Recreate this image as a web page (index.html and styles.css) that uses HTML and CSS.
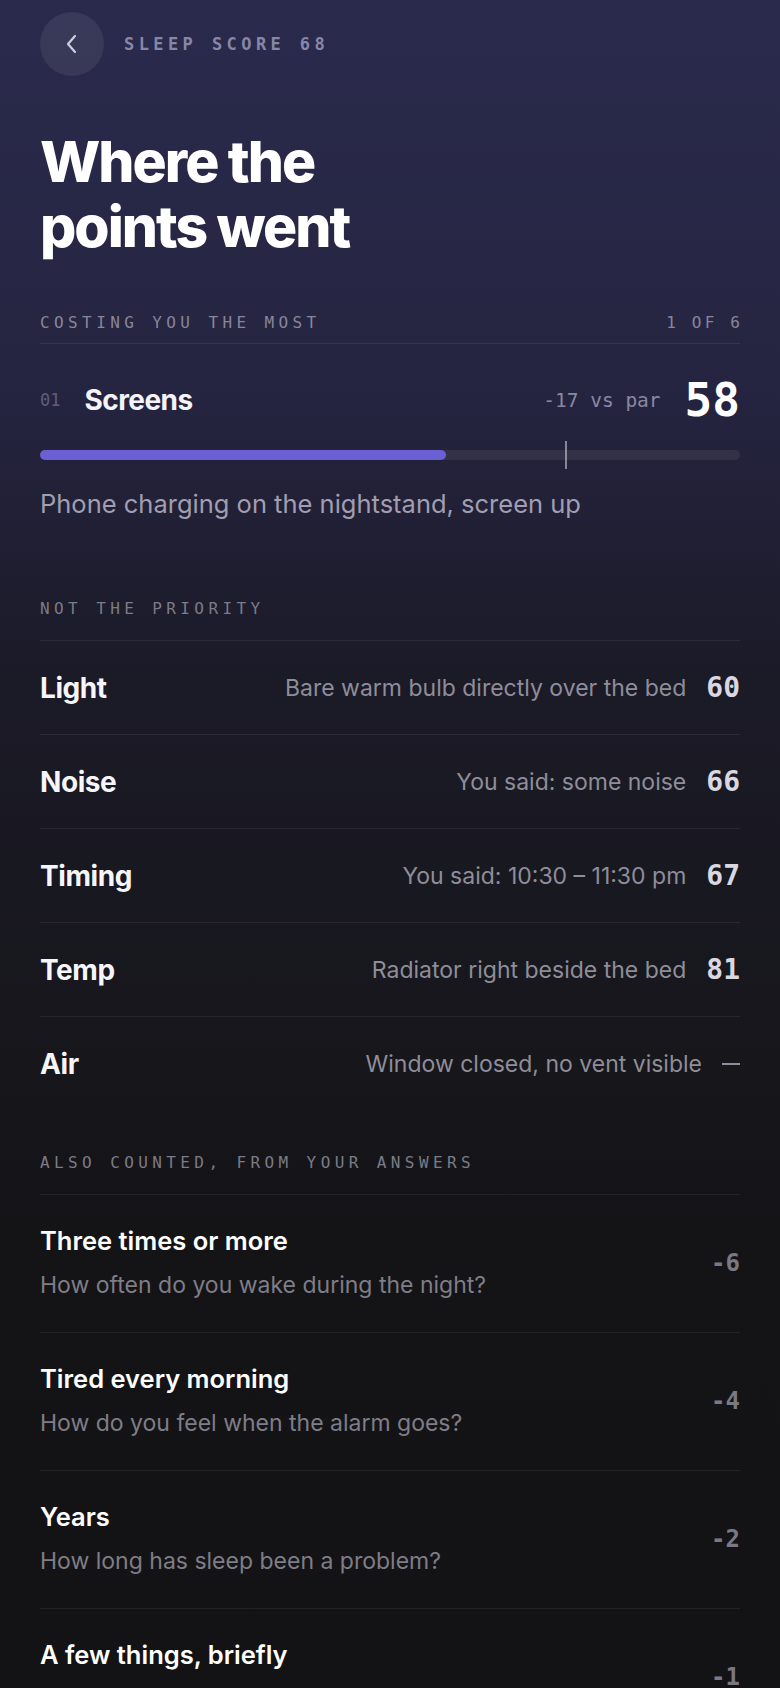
FILE: index.html
```html
<!DOCTYPE html>
<html lang="en">
<head>
    <meta charset="UTF-8">
    <meta name="viewport" content="width=device-width, initial-scale=1.0">
    <title>Where the points went</title>
    <link rel="stylesheet" href="styles.css">
</head>
<body>
    <div class="page">
        <header class="topbar">
            <button class="back" aria-label="Back">
                <svg viewBox="0 0 24 24"><path d="M15 4 L8 12 L15 20"/></svg>
            </button>
            <span class="kicker">SLEEP SCORE 68</span>
        </header>

        <h1 class="title">Where the<br>points went</h1>

        <section class="focus">
            <div class="focus-head">
                <span class="label">COSTING YOU THE MOST</span>
                <span class="label">1 OF 6</span>
            </div>
            <div class="focus-row">
                <span class="idx">01</span>
                <span class="focus-name">Screens</span>
                <span class="vs">-17 vs par</span>
                <span class="focus-score">58</span>
            </div>
            <div class="meter">
                <div class="meter-fill" style="width: 58%"></div>
                <div class="meter-par" style="left: 75%"></div>
            </div>
            <p class="focus-note">Phone charging on the nightstand, screen up</p>
        </section>

        <section class="group">
            <div class="label group-label">NOT THE PRIORITY</div>
            <div class="factor">
                <span class="factor-name">Light</span>
                <span class="factor-note">Bare warm bulb directly over the bed</span>
                <span class="factor-score">60</span>
            </div>
            <div class="factor">
                <span class="factor-name">Noise</span>
                <span class="factor-note">You said: some noise</span>
                <span class="factor-score">66</span>
            </div>
            <div class="factor">
                <span class="factor-name">Timing</span>
                <span class="factor-note">You said: 10:30 – 11:30 pm</span>
                <span class="factor-score">67</span>
            </div>
            <div class="factor">
                <span class="factor-name">Temp</span>
                <span class="factor-note">Radiator right beside the bed</span>
                <span class="factor-score">81</span>
            </div>
            <div class="factor">
                <span class="factor-name">Air</span>
                <span class="factor-note">Window closed, no vent visible</span>
                <span class="factor-score empty"></span>
            </div>
        </section>

        <section class="group answers">
            <div class="label group-label">ALSO COUNTED, FROM YOUR ANSWERS</div>
            <div class="answer">
                <div class="answer-text">
                    <div class="answer-title">Three times or more</div>
                    <div class="answer-q">How often do you wake during the night?</div>
                </div>
                <span class="answer-score">-6</span>
            </div>
            <div class="answer">
                <div class="answer-text">
                    <div class="answer-title">Tired every morning</div>
                    <div class="answer-q">How do you feel when the alarm goes?</div>
                </div>
                <span class="answer-score">-4</span>
            </div>
            <div class="answer">
                <div class="answer-text">
                    <div class="answer-title">Years</div>
                    <div class="answer-q">How long has sleep been a problem?</div>
                </div>
                <span class="answer-score">-2</span>
            </div>
            <div class="answer">
                <div class="answer-text">
                    <div class="answer-title">A few things, briefly</div>
                    <div class="answer-q">Does anything else keep you up?</div>
                </div>
                <span class="answer-score">-1</span>
            </div>
        </section>
    </div>
</body>
</html>
```

FILE: styles.css
```css
html {
    background-color: #131315;
}
body {
    margin: 0;
    min-height: 100vh;
    font-family: Inter, "Noto Sans", Arial, sans-serif;
    color: #f4f3f7;
    background: linear-gradient(180deg, #2a2a4d 0px, #252440 400px, #1b1a27 680px, #17171d 1000px, #141417 1250px, #131315 1700px);
}
.page {
    padding: 12px 40px 40px;
}

/* top bar */
.topbar {
    display: flex;
    align-items: center;
    gap: 20px;
}
.back {
    width: 64px;
    height: 64px;
    padding: 0;
    border: none;
    border-radius: 50%;
    background-color: rgba(255, 255, 255, 0.07);
    display: flex;
    align-items: center;
    justify-content: center;
    cursor: pointer;
}
.back svg {
    width: 24px;
    height: 24px;
    fill: none;
    stroke: #cfcde2;
    stroke-width: 2.2;
    stroke-linecap: round;
    stroke-linejoin: round;
}
.kicker {
    font-family: "DejaVu Sans Mono", "Liberation Mono", monospace;
    font-size: 17px;
    font-weight: 700;
    letter-spacing: 0.26em;
    color: #8886a6;
}

.title {
    margin: 53px 0 0;
    font-size: 57px;
    line-height: 65px;
    font-weight: 800;
    letter-spacing: -0.035em;
    color: #ffffff;
}

.label {
    font-family: "DejaVu Sans Mono", "Liberation Mono", monospace;
    font-size: 16px;
    line-height: 20px;
    letter-spacing: 0.275em;
    color: #88869b;
}

/* biggest cost */
.focus-head {
    display: flex;
    justify-content: space-between;
    margin-top: 54px;
    padding-bottom: 10px;
    border-bottom: 1px solid rgba(255, 255, 255, 0.08);
}
.focus-head .label:last-child {
    letter-spacing: 0.2em;
    margin-right: -0.2em;
}
.group-label {
    color: #7c7b86;
}
.focus-row {
    display: flex;
    align-items: center;
    margin-top: 34px;
}
.idx {
    font-family: "DejaVu Sans Mono", "Liberation Mono", monospace;
    font-size: 17px;
    color: #5f5d7a;
    margin-right: 24px;
}
.focus-name {
    flex: 1;
    font-size: 28px;
    font-weight: 700;
    letter-spacing: -0.02em;
}
.vs {
    font-family: "DejaVu Sans Mono", "Liberation Mono", monospace;
    font-size: 19.5px;
    color: #8a88a0;
    margin-right: 24px;
}
.focus-score {
    font-family: "DejaVu Sans Mono", "Liberation Mono", monospace;
    font-size: 46px;
    line-height: 44px;
    font-weight: 700;
    color: #ffffff;
}
.meter {
    position: relative;
    height: 10px;
    margin-top: 28px;
    border-radius: 5px;
    background-color: rgba(255, 255, 255, 0.07);
}
.meter-fill {
    height: 100%;
    border-radius: 5px;
    background-color: #6b5fd4;
}
.meter-par {
    position: absolute;
    top: -9px;
    width: 2px;
    height: 28px;
    background-color: rgba(255, 255, 255, 0.45);
}
.focus-note {
    margin: 30px 0 0;
    font-size: 25.5px;
    line-height: 28px;
    color: #a09eb0;
}

/* lists */
.group {
    margin-top: 81px;
}
.group.answers {
    margin-top: 43px;
}
.group-label {
    margin-bottom: 21px;
}
.factor {
    display: flex;
    align-items: center;
    height: 94px;
    box-sizing: border-box;
    border-top: 1px solid rgba(255, 255, 255, 0.07);
}
.factor-name {
    font-size: 28px;
    font-weight: 700;
    letter-spacing: -0.015em;
    color: #f6f5f8;
}
.factor-note {
    flex: 1;
    text-align: right;
    font-size: 23px;
    color: #8f8d99;
}
.factor-score {
    margin-left: 20px;
    font-family: "DejaVu Sans Mono", "Liberation Mono", monospace;
    font-size: 28px;
    font-weight: 700;
    color: #d9d8e0;
}
.factor-score.empty {
    width: 18px;
    height: 2px;
    background-color: #8f8d99;
}

.answer {
    display: flex;
    align-items: center;
    padding: 31px 0 33px;
    border-top: 1px solid rgba(255, 255, 255, 0.07);
}
.answer-text {
    flex: 1;
}
.answer-title {
    font-size: 25.5px;
    line-height: 30px;
    font-weight: 600;
    color: #ffffff;
}
.answer-q {
    margin-top: 15px;
    font-size: 23px;
    line-height: 28px;
    color: #7f7d87;
}
.answer-score {
    font-family: "DejaVu Sans Mono", "Liberation Mono", monospace;
    font-size: 24px;
    font-weight: 700;
    color: #7a7882;
}
```
